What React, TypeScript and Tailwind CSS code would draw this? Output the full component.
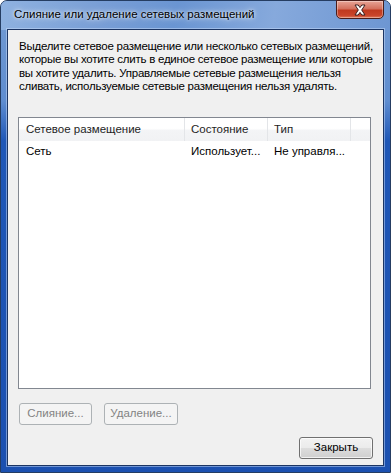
import React from "react";

const font = { fontFamily: '"Liberation Sans", Arial, sans-serif' };

function CloseGlyph() {
  return (
    <svg width="14" height="12" viewBox="0 0 14 12">
      <path d="M2 1 L5.2 1 L7 3.6 L8.8 1 L12 1 L8.7 6 L12 11 L8.8 11 L7 8.4 L5.2 11 L2 11 L5.3 6 Z" fill="#ffffff" stroke="#3b2020" strokeWidth="1" strokeLinejoin="round" />
    </svg>
  );
}

export default function App() {
  return (
    <div className="w-[391px] h-[473px] overflow-hidden bg-white" style={font}>
      <div className="relative flex h-full w-full flex-col rounded-t-[7px] border border-[#253d62] bg-[linear-gradient(180deg,#7ba2d6_0px,#6d97d1_30px,#5f8dd0_100px,#1f57b7_140px,#1b50b0_473px)] px-[6px] pb-[6px]">
        <div className="absolute inset-x-0 top-0 h-[29px] rounded-t-[6px] bg-[linear-gradient(100deg,#8fb2e0_0%,#7a9fd6_25%,#6a95d2_45%,#86a9dc_70%,#6d96d2_100%)]" />
        <div className="relative flex h-[28px] items-center pl-[7px]">
          <span className="text-[11.5px] text-black [text-shadow:0_0_6px_rgba(255,255,255,0.9),0_0_3px_rgba(255,255,255,0.8)]">Слияние или удаление сетевых размещений</span>
        </div>
        <div className="absolute right-[6px] top-[-1px] flex h-[19px] w-[48px] items-center justify-center rounded-b-[5px] border border-[#4a1d1a] bg-[linear-gradient(180deg,#e8a597_0%,#d4715e_45%,#c0391f_55%,#c9452a_85%,#e07a5c_100%)] shadow-[inset_0_0_0_1px_rgba(255,255,255,0.35)]">
          <CloseGlyph />
        </div>
        <div className="relative flex flex-1 flex-col border border-[#1c3563] bg-[#f0f0f0] text-[11.5px] shadow-[0_0_0_1px_rgba(200,220,250,0.5)]">
          <p className="ml-[11px] mt-[10px] whitespace-nowrap leading-[13.4px] tracking-[-0.25px] text-black">
            Выделите сетевое размещение или несколько сетевых размещений,
            <br />
            которые вы хотите слить в единое сетевое размещение или которые
            <br />
            вы хотите удалить. Управляемые сетевые размещения нельзя
            <br />
            сливать, используемые сетевые размещения нельзя удалять.
          </p>
          <div className="ml-[10px] mt-[23px] flex h-[272px] w-[353px] flex-col border border-[#828790] bg-white">
            <div className="flex h-[23px] bg-[linear-gradient(180deg,#ffffff_0%,#ffffff_45%,#f3f4f6_55%,#f1f2f4_100%)] text-[#1e1e1e]">
              <div className="flex w-[166px] items-center border-r border-[#e3e5e8] pl-[7px]">Сетевое размещение</div>
              <div className="flex w-[83px] items-center border-r border-[#e3e5e8] pl-[6px]">Состояние</div>
              <div className="flex w-[83px] items-center border-r border-[#e3e5e8] pl-[6px]">Тип</div>
              <div className="flex-1" />
            </div>
            <div className="flex h-[22px] items-center text-black">
              <div className="w-[166px] pl-[7px]">Сеть</div>
              <div className="w-[83px] whitespace-nowrap pl-[6px]">Использует...</div>
              <div className="w-[83px] whitespace-nowrap pl-[6px]">Не управля...</div>
            </div>
          </div>
          <div className="ml-[11px] mt-[14px] flex gap-[12px]">
            <div className="flex h-[22px] w-[73px] items-center justify-center rounded-[3px] border border-[#adb2b5] bg-[#f4f4f4] text-[#838383]">Слияние...</div>
            <div className="flex h-[22px] w-[74px] items-center justify-center rounded-[3px] border border-[#adb2b5] bg-[#f4f4f4] text-[#838383]">Удаление...</div>
          </div>
          <div className="mr-[10px] mt-[12px] flex justify-end">
            <div className="flex h-[22px] w-[74px] items-center justify-center rounded-[3px] border border-[#707070] bg-[linear-gradient(180deg,#f2f2f2_0%,#ebebeb_50%,#dddddd_50%,#cfcfcf_100%)] text-black shadow-[inset_0_0_0_1px_rgba(255,255,255,0.7)]">Закрыть</div>
          </div>
        </div>
      </div>
    </div>
  );
}
